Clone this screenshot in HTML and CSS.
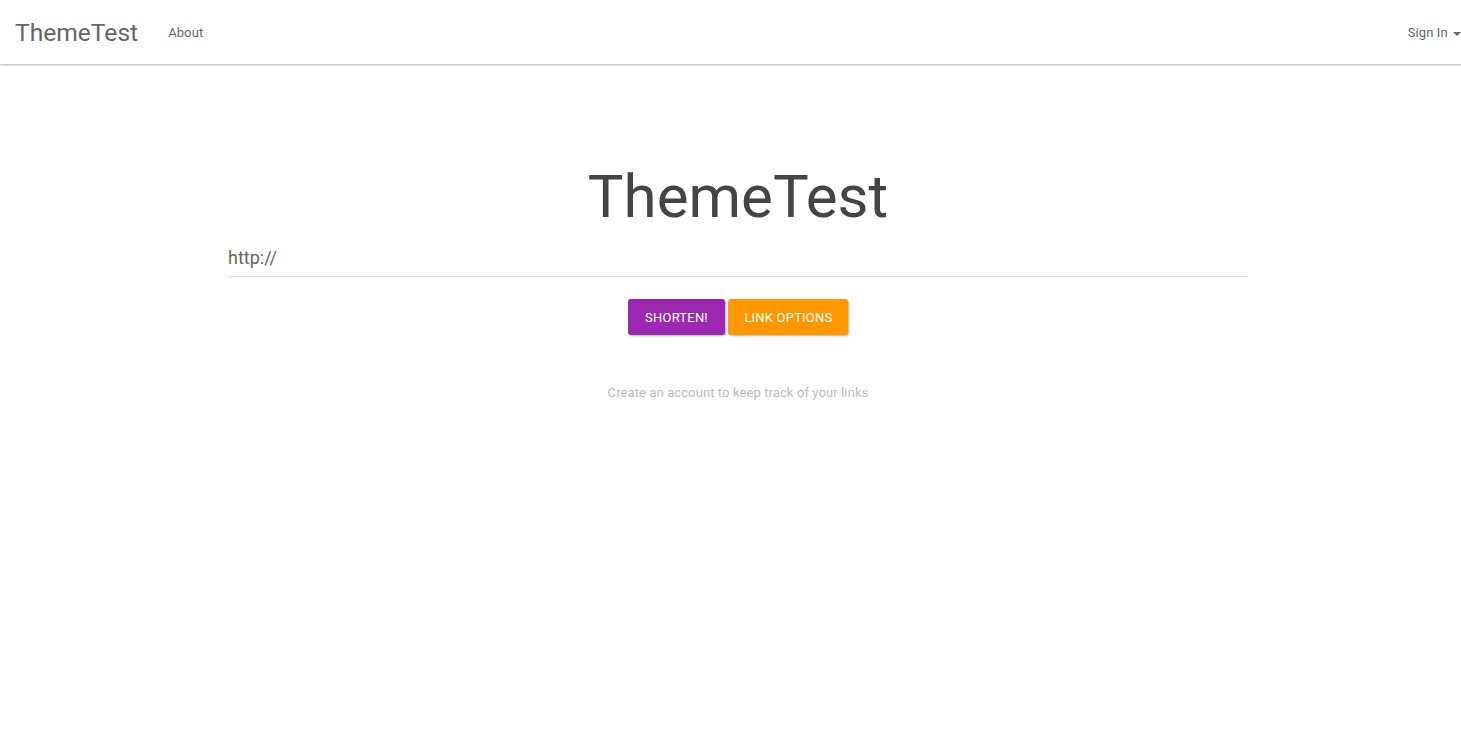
FILE: index.html
```html
<!DOCTYPE html>
<html>
<head>
<meta charset="utf-8">
<title>ThemeTest</title>
<link rel="stylesheet" href="styles.css">
</head>
<body>
<div class="page">
  <nav class="navbar">
    <a class="brand" href="#">ThemeTest</a>
    <ul class="nav-left">
      <li><a href="#">About</a></li>
    </ul>
    <div class="nav-right">
      <a href="#">Sign In <span class="caret"></span></a>
    </div>
  </nav>
  <main class="main">
    <h1 class="title">ThemeTest</h1>
    <div class="field">http://</div>
    <div class="buttons">
      <button class="btn btn-primary">Shorten!</button>
      <button class="btn btn-warning">Link Options</button>
    </div>
    <p class="hint">Create an account to keep track of your links</p>
  </main>
</div>
</body>
</html>
```

FILE: styles.css
```css
html, body {
  margin: 0;
  padding: 0;
  overflow: hidden;
  background: #fff;
}
body {
  font-family: Roboto, "Liberation Sans", sans-serif;
  color: #666;
}
.page {
  width: 1476px;
}
.navbar {
  height: 64px;
  display: flex;
  align-items: center;
  padding: 0 15px;
  box-shadow: 0 1px 2px rgba(0,0,0,0.3);
  position: relative;
}
.navbar a {
  text-decoration: none;
  color: #666;
}
.brand {
  font-size: 24.6px;
  line-height: 64px;
  margin-right: 15px;
  padding-top: 2px;
}
.nav-left {
  list-style: none;
  margin: 0;
  padding: 0;
  display: flex;
  flex: 1;
}
.nav-left a, .nav-right a {
  font-size: 13px;
  display: block;
  padding: 2px 15px 0;
  line-height: 64px;
  letter-spacing: 0.1px;
}
.nav-right a {
  padding: 2px 0 0;
}
.caret {
  display: inline-block;
  width: 0;
  height: 0;
  margin-left: 2px;
  vertical-align: middle;
  border-top: 4px solid #666;
  border-left: 4px solid transparent;
  border-right: 4px solid transparent;
}
.main {
  width: 1020px;
  margin: 0 auto;
  display: flex;
  flex-direction: column;
  align-items: center;
}
.title {
  font-size: 60px;
  font-weight: 400;
  color: #444;
  margin: 98px 0 0;
  line-height: 70px;
}
.field {
  align-self: stretch;
  font-size: 18px;
  color: #666;
  margin-top: 15px;
  padding-bottom: 7px;
  border-bottom: 1px solid #ddd;
  line-height: 22px;
}
.buttons {
  display: flex;
  gap: 3px;
  margin-top: 22px;
}
.btn {
  font-family: Roboto, "Liberation Sans", sans-serif;
  font-size: 13px;
  text-transform: uppercase;
  color: #fff;
  border: none;
  border-radius: 3px;
  height: 36px;
  padding: 0 16px;
  box-shadow: 1px 1px 2px rgba(0,0,0,0.3);
  letter-spacing: 0.2px;
}
.btn-primary { background: #9c27b0; padding: 0 17.5px; }
.btn-warning { background: #ff9800; }
.hint {
  font-size: 13px;
  color: #bbb;
  margin: 50px 0 0;
  letter-spacing: 0.1px;
}
```
